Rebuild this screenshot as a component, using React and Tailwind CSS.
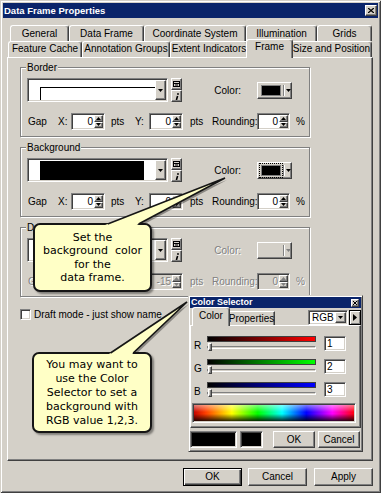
import React from "react";

const ui = "font-['Liberation_Sans_Narrow','Liberation_Sans',Arial,sans-serif] text-[10px] leading-none";
const raised =
  "border border-t-white border-l-white border-b-[#404040] border-r-[#404040] shadow-[inset_-1px_-1px_0_#808080]";
const sunken =
  "border border-t-[#808080] border-l-[#808080] border-b-white border-r-white shadow-[inset_1px_1px_0_#404040,inset_-1px_-1px_0_#d4d0c8]";
const etched = "border border-[#808080] shadow-[1px_1px_0_#fff,inset_1px_1px_0_#fff]";
const dim = "text-[#808080] [text-shadow:1px_1px_0_#fff]";
const winFrame =
  "border border-t-[#d4d0c8] border-l-[#d4d0c8] border-b-[#404040] border-r-[#404040] shadow-[inset_1px_1px_0_#fff,inset_-1px_-1px_0_#808080]";

const Tri = ({ dir = "down", c = "#000" }) => {
  if (dir === "up")
    return (
      <svg width="5" height="3" viewBox="0 0 5 3">
        <path d="M0 3h5L2.5 0z" fill={c} />
      </svg>
    );
  if (dir === "right")
    return (
      <svg width="4" height="7" viewBox="0 0 4 7">
        <path d="M0 0l4 3.5L0 7z" fill={c} />
      </svg>
    );
  return (
    <svg width="5" height="3" viewBox="0 0 5 3">
      <path d="M0 0h5L2.5 3z" fill={c} />
    </svg>
  );
};

function Spin({ v = "0", w = "w-[34px]", off }) {
  return (
    <div className={`flex h-[17px] p-[1px] ${w} ${sunken} ${off ? "bg-[#d4d0c8]" : "bg-white"}`}>
      <span className={`flex flex-1 items-center justify-end pr-[1px] ${off ? dim : ""}`}>{v}</span>
      <div className="flex w-[9px] flex-col">
        <div className={`flex flex-1 items-center justify-center bg-[#d4d0c8] ${raised}`}>
          <Tri dir="up" c={off ? "#808080" : "#000"} />
        </div>
        <div className={`flex flex-1 items-center justify-center bg-[#d4d0c8] ${raised}`}>
          <Tri c={off ? "#808080" : "#000"} />
        </div>
      </div>
    </div>
  );
}

function StyleBox({ children }) {
  return (
    <div className={`flex h-[24px] w-[141px] bg-white p-[1px] ${sunken}`}>
      <div className="flex flex-1 flex-col">{children}</div>
      <div className={`flex w-[11px] items-center justify-center bg-[#d4d0c8] ${raised}`}>
        <Tri />
      </div>
    </div>
  );
}

function StyleBtns() {
  return (
    <div className="ml-[3px] flex w-[11px] flex-col">
      <div className={`flex h-[12px] items-center justify-center bg-[#d4d0c8] ${raised}`}>
        <svg width="7" height="6" viewBox="0 0 7 6">
          <rect x="0.5" y="0.5" width="6" height="5" fill="none" stroke="#000" />
          <path d="M1 2.5h5M2 4h3" stroke="#000" />
        </svg>
      </div>
      <div className={`flex h-[12px] items-center justify-center bg-[#d4d0c8] ${raised}`}>
        <svg width="4" height="7" viewBox="0 0 4 7">
          <circle cx="3" cy="1" r="0.9" fill="#000" />
          <path d="M2.6 3L1.4 7" stroke="#000" strokeWidth="1.6" />
        </svg>
      </div>
    </div>
  );
}

function ColorBtn({ focus, off }) {
  return (
    <div className={`flex h-[17px] w-[35px] items-center bg-[#d4d0c8] ${raised}`}>
      <div className="flex h-full w-[25px] items-center justify-center">
        {!off && (
          <div
            className={`h-[11px] w-[20px] border border-[#808080] bg-black ${
              focus ? "outline-1 outline-offset-1 outline-dotted outline-black" : ""
            }`}
          />
        )}
      </div>
      <div className="h-[11px] w-[2px] border-l border-r border-l-[#808080] border-r-white" />
      <div className="flex flex-1 justify-center">
        <Tri c={off ? "#808080" : "#000"} />
      </div>
    </div>
  );
}

function Group({ title, children }) {
  return (
    <div className={`relative h-[70px] w-[290px] ${etched}`}>
      <span className="absolute left-[5px] top-[-5px] bg-[#d4d0c8] px-[1px]">{title}</span>
      {children}
    </div>
  );
}

function FrameGroup({ title, preview, focus, off, v = "0" }) {
  const t = off ? dim : "";
  return (
    <Group title={title}>
      <div className="ml-[6px] mt-[10px] flex h-[24px] items-center">
        <StyleBox>{preview}</StyleBox>
        <StyleBtns />
        <span className={`mt-[1px] w-[59px] text-right ${t}`}>Color:</span>
        <div className="ml-[16px] mt-[1px]">
          <ColorBtn focus={focus} off={off} />
        </div>
      </div>
      <div className="ml-[7px] mt-[11px] flex h-[17px] items-center">
        <span className={`w-[30px] ${t}`}>Gap</span>
        <span className={`w-[13px] ${t}`}>X:</span>
        <Spin v={v} off={off} />
        <span className={`ml-[6px] w-[24px] ${t}`}>pts</span>
        <span className={`w-[14px] ${t}`}>Y:</span>
        <Spin v={v} off={off} />
        <span className={`ml-[7px] w-[22px] ${t}`}>pts</span>
        <span className={`w-[45px] ${t}`}>Rounding:</span>
        <Spin v="0" w="w-[33px]" off={off} />
        <span className={`ml-[6px] ${t}`}>%</span>
      </div>
    </Group>
  );
}

function Tab({ t, w, sel }) {
  return (
    <div
      className={`flex shrink-0 items-center justify-center rounded-t-[3px] border border-b-0 border-t-white border-l-white border-r-[#404040] bg-[#d4d0c8] shadow-[inset_-1px_0_0_#808080] ${w} ${
        sel ? "relative z-10 -mx-[2px] -mb-[1px] h-[19px] pb-[3px]" : "h-[16px]"
      }`}
    >
      {t}
    </div>
  );
}

const row1 = [
  { t: "General", w: "w-[59px]" },
  { t: "Data Frame", w: "w-[75px]" },
  { t: "Coordinate System", w: "w-[102px]" },
  { t: "Illumination", w: "w-[71px]" },
  { t: "Grids", w: "w-[55px]" },
];
const row2 = [
  { t: "Feature Cache", w: "w-[74px]" },
  { t: "Annotation Groups", w: "w-[88px]" },
  { t: "Extent Indicators", w: "w-[78px]" },
  { t: "Frame", w: "w-[47px]", sel: true },
  { t: "Size and Position", w: "w-[81px]" },
];

const sliders = [
  { l: "R", v: "1", g: "bg-[linear-gradient(to_right,#000,#ff0000)]" },
  { l: "G", v: "2", g: "bg-[linear-gradient(to_right,#000,#00ff00)]" },
  { l: "B", v: "3", g: "bg-[linear-gradient(to_right,#000,#0000ff)]" },
];

function ColorSelector() {
  return (
    <div className={`absolute left-[188px] top-[295px] w-[175px] bg-[#d4d0c8] p-[1px] ${winFrame}`}>
      <div className="flex h-[11px] items-center justify-between bg-[#0a246a] pl-[1px] pr-[2px]">
        <span className="font-['Liberation_Sans',Arial,sans-serif] text-[9px] font-bold text-white">
          Color Selector
        </span>
        <div className={`flex h-[8px] w-[8px] items-center justify-center bg-[#d4d0c8] ${raised}`}>
          <svg width="4" height="4" viewBox="0 0 4 4">
            <path d="M0 0l4 4M4 0L0 4" stroke="#000" strokeWidth="1" />
          </svg>
        </div>
      </div>
      <div className="flex h-[17px] items-end">
        <Tab t="Color" w="w-[38px] ml-[2px]" sel />
        <div className="flex h-[14px] w-[47px] items-center justify-center border border-b-0 border-t-white border-l-white border-r-[#404040] bg-[#d4d0c8] shadow-[inset_-1px_0_0_#808080]">
          Properties
        </div>
        <div className={`ml-[33px] flex h-[15px] w-[42px] self-start bg-white p-[1px] mt-[2px] ${sunken}`}>
          <span className="flex flex-1 items-center pl-[2px] font-['Liberation_Sans',Arial,sans-serif]">RGB</span>
          <div className={`flex w-[11px] items-center justify-center bg-[#d4d0c8] ${raised}`}>
            <Tri />
          </div>
        </div>
        <div className="ml-[1px] mt-[2px] flex h-[15px] w-[13px] items-center justify-center self-start border border-black bg-[#d4d0c8] shadow-[inset_1px_1px_0_#fff,inset_-1px_-1px_0_#808080]">
          <Tri dir="right" />
        </div>
      </div>
      <div className="h-[103px] border border-t-white border-l-white border-b-[#404040] border-r-[#404040] shadow-[inset_-1px_-1px_0_#808080]">
        <div className="mt-[10px] flex flex-col gap-[8px]">
          {sliders.map((s) => (
            <div key={s.l} className="flex h-[15px]">
              <span className="w-[16px] self-end pl-[3px]">{s.l}</span>
              <div className="flex w-[109px] flex-col">
                <div className={`h-[6px] border border-[#404040] ${s.g}`} />
                <div className="relative mt-[4px] h-[3px] border border-t-[#808080] border-l-[#808080] border-b-white border-r-white">
                  <div className={`absolute left-0 top-[-4px] h-[8px] w-[4px] bg-[#d4d0c8] ${raised}`} />
                </div>
              </div>
              <div className={`ml-[8px] flex h-[15px] w-[22px] items-center bg-white pl-[2px] ${sunken}`}>
                {s.v}
              </div>
            </div>
          ))}
        </div>
        <div
          className={`ml-[1px] mt-[6px] h-[20px] w-[164px] ${sunken} bg-[linear-gradient(to_bottom,rgba(255,255,255,0.55),rgba(255,255,255,0)_45%,rgba(0,0,0,0)_55%,rgba(0,0,0,0.95)),linear-gradient(to_right,#c00000,#ff4000_8%,#ffff00_24%,#00ff00_40%,#00ffff_55%,#0000ff_70%,#ff00ff_86%,#ff0000)]`}
        />
      </div>
      <div className="mt-[3px] flex pb-[2px]">
        <div className={`h-[17px] w-[47px] bg-black ${sunken}`} />
        <div className={`ml-[3px] h-[17px] w-[23px] bg-black ${sunken}`} />
        <div className={`ml-[10px] flex h-[17px] w-[42px] items-center justify-center ${raised}`}>OK</div>
        <div className={`ml-[3px] flex h-[17px] w-[42px] items-center justify-center ${raised}`}>Cancel</div>
      </div>
    </div>
  );
}

const callout =
  "absolute flex items-center justify-center rounded-[7px] border-2 border-[#151515] bg-[#ffffc6] text-center font-['DejaVu_Sans',sans-serif] text-[11px] leading-[13.5px] shadow-[2px_2px_2px_rgba(0,0,0,0.4)]";

export default function App() {
  return (
    <div
      className={`relative h-[493px] w-[381px] overflow-hidden bg-[#d4d0c8] p-[3px] text-black shadow-[inset_1px_1px_0_#d4d0c8,inset_-1px_-1px_0_#404040,inset_2px_2px_0_#fff,inset_-2px_-2px_0_#808080] ${ui}`}
    >
      <div className="flex h-[15px] items-center justify-between bg-[#0a246a] pl-[1px] pr-[1px]">
        <span className="font-['Liberation_Sans',Arial,sans-serif] text-[9.5px] font-bold text-white">
          Data Frame Properties
        </span>
        <div className={`flex h-[11px] w-[12px] items-center justify-center bg-[#d4d0c8] ${raised}`}>
          <svg width="6" height="5" viewBox="0 0 6 5">
            <path d="M0 0l6 5M6 0L0 5" stroke="#000" strokeWidth="1.3" />
          </svg>
        </div>
      </div>

      <div className="ml-[7px] mt-[7px] flex h-[16px] items-end">
        {row1.map((r) => (
          <Tab key={r.t} t={<span className="pt-[1px]">{r.t}</span>} w={r.w} />
        ))}
      </div>
      <div className="ml-[5px] flex h-[16px] items-end">
        {row2.map((r) => (
          <Tab key={r.t} t={<span className="pb-[2px]">{r.t}</span>} w={r.w} sel={r.sel} />
        ))}
      </div>

      <div className="ml-[4px] h-[404px] w-[366px] border border-t-white border-l-white border-b-[#404040] border-r-[#404040] shadow-[inset_-1px_-1px_0_#808080]">
        <div className="ml-[12px] mt-[9px] flex flex-col gap-[10px]">
          <FrameGroup
            title="Border"
            preview={<div className="ml-[11px] mt-[7px] flex-1 border-l border-t border-black" />}
          />
          <FrameGroup
            title="Background"
            focus
            preview={<div className="ml-[11px] mr-[11px] mt-[1px] flex-1 bg-black" />}
          />
          <FrameGroup title="Drop Shadow" off v="-15" preview={null} />
        </div>
        <div className="ml-[12px] mt-[12px] flex items-center">
          <div className={`h-[11px] w-[11px] bg-white ${sunken}`} />
          <span className="ml-[3px]">Draft mode - just show name</span>
        </div>
      </div>

      <div className="ml-[180px] mt-[7px] flex gap-[6px]">
        <div className="flex h-[18px] w-[59px] items-center justify-center border border-black shadow-[inset_1px_1px_0_#fff,inset_-1px_-1px_0_#404040,inset_-2px_-2px_0_#808080]">
          OK
        </div>
        <div className={`flex h-[18px] w-[59px] items-center justify-center ${raised}`}>Cancel</div>
        <div className={`ml-[1px] flex h-[18px] w-[59px] items-center justify-center ${raised}`}>Apply</div>
      </div>

      <ColorSelector />

      <svg className="pointer-events-none absolute left-0 top-0" width="381" height="493">
        <polygon points="102,229 135,229 227,180" fill="rgba(0,0,0,0.35)" />
        <polygon points="108,358 132,358 189,304" fill="rgba(0,0,0,0.35)" />
      </svg>

      <div className={`${callout} left-[33px] top-[223px] h-[69px] w-[119px]`}>
        <p>
          Set the
          <br />
          background&nbsp; color
          <br />
          for the
          <br />
          data frame.
        </p>
      </div>
      <div className={`${callout} left-[32px] top-[352px] h-[81px] w-[120px] leading-[14px]`}>
        <p>
          You may want to
          <br />
          use the Color
          <br />
          Selector to set a
          <br />
          background with
          <br />
          RGB value 1,2,3.
        </p>
      </div>

      <svg className="pointer-events-none absolute left-0 top-0" width="381" height="493">
        <polygon points="100,227 133,227 225,178" fill="#ffffc6" />
        <polyline points="107.7,224 225,178 138.6,224" fill="none" stroke="#151515" strokeWidth="1.6" />
        <polygon points="106,356 130,356 187,302" fill="#ffffc6" />
        <polyline points="110.5,353 187,302 133.2,353" fill="none" stroke="#151515" strokeWidth="1.6" />
      </svg>
    </div>
  );
}
